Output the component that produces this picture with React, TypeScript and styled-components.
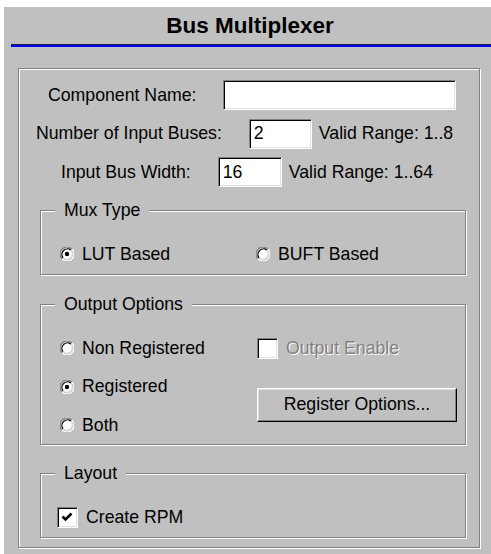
import React from "react";
import styled, { createGlobalStyle } from "styled-components";

const GlobalStyle = createGlobalStyle`
  html, body {
    margin: 0;
    padding: 0;
    background: #ffffff;
  }
  body {
    font-family: "Liberation Sans", Arial, sans-serif;
  }
`;

function Radio({ checked, label }: { checked?: boolean; label: string }) {
  return (
    <Option>
      <RadioIcon width='14' height='14' viewBox='0 0 14 14'>
        <path d='M2.05 11.95 A7 7 0 0 1 11.95 2.05' fill='none' stroke='#808080' strokeWidth='1.2' />
        <path d='M11.95 2.05 A7 7 0 0 1 2.05 11.95' fill='none' stroke='#ffffff' strokeWidth='1.2' />
        <circle cx='7' cy='7' r='5.4' fill='#ffffff' />
        <path d='M3.2 10.8 A5.4 5.4 0 0 1 10.8 3.2' fill='none' stroke='#000000' strokeWidth='1.2' />
        <path d='M10.8 3.2 A5.4 5.4 0 0 1 3.2 10.8' fill='none' stroke='#dfdfdf' strokeWidth='1.2' />
        {checked && <circle cx='7' cy='7' r='2.2' fill='#000000' />}
      </RadioIcon>
      <span>{label}</span>
    </Option>
  );
}

function Check({
  checked,
  disabled,
  label,
}: {
  checked?: boolean;
  disabled?: boolean;
  label: string;
}) {
  return (
    <Option>
      <CheckBox>
        {checked && (
          <svg width='17' height='17' viewBox='0 0 17 17'>
            <polyline
              points='3.5,7.5 6.5,10.5 12.5,4.5'
              fill='none'
              stroke='#000'
              strokeWidth='2.6'
            />
          </svg>
        )}
      </CheckBox>
      <OptionText $disabled={!!disabled}>{label}</OptionText>
    </Option>
  );
}

function App() {
  return (
    <>
      <GlobalStyle />
      <Frame>
        <Title>Bus Multiplexer</Title>
        <Rule />
        <Panel>
          <FieldRow $indent={29}>
            <Label>Component Name:</Label>
            <TextField $width={233} defaultValue='' />
          </FieldRow>
          <FieldRow $indent={17}>
            <Label>Number of Input Buses:</Label>
            <TextField $width={63} defaultValue='2' />
            <Range>Valid Range: 1..8</Range>
          </FieldRow>
          <FieldRow $indent={42}>
            <Label>Input Bus Width:</Label>
            <TextField $width={64} defaultValue='16' />
            <Range>Valid Range: 1..64</Range>
          </FieldRow>

          <Group $height={65} $top={23}>
            <Legend>Mux Type</Legend>
            <Column $width={196}>
              <Radio checked label='LUT Based' />
            </Column>
            <Column>
              <Radio label='BUFT Based' />
            </Column>
          </Group>

          <Group $height={141} $top={29}>
            <Legend>Output Options</Legend>
            <Column $width={197}>
              <Radio label='Non Registered' />
              <Radio checked label='Registered' />
              <Radio label='Both' />
            </Column>
            <Column>
              <Check disabled label='Output Enable' />
              <Button>Register Options...</Button>
            </Column>
          </Group>

          <Group $height={65} $top={28} $left={16}>
            <Legend>Layout</Legend>
            <Column>
              <Check checked label='Create RPM' />
            </Column>
          </Group>
        </Panel>
      </Frame>
    </>
  );
}

export default App;

const Frame = styled.div`
  margin: 7px 0 0 4px;
  height: 547px;
  background: #c0c0c0;
  color: #000;
  font-size: 17.7px;
  display: flex;
  flex-direction: column;
  overflow: hidden;
`;

const Title = styled.h1`
  margin: 0;
  height: 37px;
  padding-left: 5px;
  display: flex;
  align-items: center;
  justify-content: center;
  font-size: 22.5px;
  font-weight: bold;
`;

const Rule = styled.div`
  margin-left: 7px;
  height: 2px;
  border-top: 1px solid #202040;
  background: #0000f0;
`;

const Panel = styled.div`
  box-sizing: border-box;
  margin: 21px 11px 0 14px;
  height: 480px;
  padding: 11px 12px 0 21px;
  border: 1px solid #808080;
  box-shadow: inset 1px 1px 0 #ffffff, 1px 1px 0 #ffffff;
  display: flex;
  flex-direction: column;
`;

const FieldRow = styled.div<{ $indent: number }>`
  display: flex;
  align-items: center;
  height: 30px;
  margin-left: ${(p) => p.$indent - 21}px;
  & + & {
    margin-top: 8.5px;
  }
`;

const Label = styled.span`
  margin-right: 27px;
  white-space: nowrap;
`;

const TextField = styled.input<{ $width: number }>`
  box-sizing: border-box;
  width: ${(p) => p.$width}px;
  height: 30px;
  padding: 0 0 0 4px;
  margin: 0;
  font: inherit;
  color: #000;
  background: #ffffff;
  border-style: solid;
  border-width: 1px;
  border-color: #808080 #ffffff #ffffff #808080;
  box-shadow: inset 1px 1px 0 #000000, inset -1px -1px 0 #dfdfdf;
  outline: none;
`;

const Range = styled.span`
  margin-left: 7px;
  white-space: nowrap;
`;

const Group = styled.div<{ $height: number; $top: number; $left?: number }>`
  position: relative;
  box-sizing: border-box;
  width: 426px;
  height: ${(p) => p.$height}px;
  margin-top: ${(p) => p.$top}px;
  padding: 31px 0 0 ${(p) => p.$left ?? 19}px;
  border: 1px solid #808080;
  box-shadow: inset 1px 1px 0 #ffffff, 1px 1px 0 #ffffff;
  display: flex;
  flex-shrink: 0;
`;

const Legend = styled.span`
  position: absolute;
  top: -11px;
  left: 14px;
  padding: 0 9px;
  line-height: 20px;
  background: #c0c0c0;
`;

const Column = styled.div<{ $width?: number }>`
  display: flex;
  flex-direction: column;
  gap: 14.5px;
  ${(p) => (p.$width ? `width: ${p.$width}px;` : "")}
`;

const Option = styled.label`
  display: flex;
  align-items: center;
  gap: 8px;
  height: 24px;
  white-space: nowrap;
`;

const OptionText = styled.span<{ $disabled: boolean }>`
  color: ${(p) => (p.$disabled ? "#808080" : "#000")};
  text-shadow: ${(p) => (p.$disabled ? "1px 1px 0 #ffffff" : "none")};
`;

const RadioIcon = styled.svg`
  display: block;
  flex-shrink: 0;
`;

const CheckBox = styled.span`
  box-sizing: border-box;
  width: 21px;
  height: 21px;
  flex-shrink: 0;
  background: #ffffff;
  border: 1px solid;
  border-color: #808080 #ffffff #ffffff #808080;
  box-shadow: inset 1px 1px 0 #000000, inset -1px -1px 0 #dfdfdf;
  display: flex;
  align-items: center;
  justify-content: center;
`;

const Button = styled.button`
  box-sizing: border-box;
  width: 200px;
  height: 34px;
  margin-top: 13px;
  padding: 0;
  font: inherit;
  color: #000;
  background: #c0c0c0;
  border: 1px solid;
  border-color: #ffffff #000000 #000000 #ffffff;
  box-shadow: inset -1px -1px 0 #808080, inset 1px 1px 0 #dfdfdf;
`;
